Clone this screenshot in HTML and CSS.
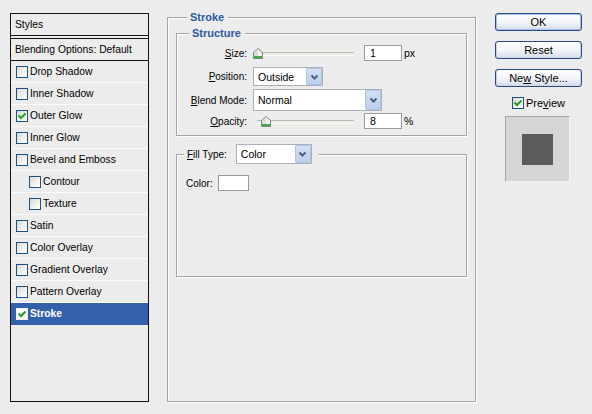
FILE: index.html
```html
<!DOCTYPE html>
<html>
<head>
<meta charset="utf-8">
<title>Layer Style</title>
<link rel="stylesheet" href="styles.css">
</head>
<body>
<div class="dialog">
  <div class="styles-panel">
    <div class="panel-head">Styles</div>
    <div class="panel-blend">Blending Options: Default</div>
    <ul class="fx-list">
      <li class="fx"><span class="cb"></span>Drop Shadow</li>
      <li class="fx"><span class="cb"></span>Inner Shadow</li>
      <li class="fx"><span class="cb"><svg width="10" height="10" viewBox="0 0 10 10"><path d="M1.5 4.5 4 7 8.5 2.5" fill="none" stroke="#21a121" stroke-width="2"/></svg></span>Outer Glow</li>
      <li class="fx"><span class="cb"></span>Inner Glow</li>
      <li class="fx"><span class="cb"></span>Bevel and Emboss</li>
      <li class="fx sub"><span class="cb"></span>Contour</li>
      <li class="fx sub"><span class="cb"></span>Texture</li>
      <li class="fx"><span class="cb"></span>Satin</li>
      <li class="fx"><span class="cb"></span>Color Overlay</li>
      <li class="fx"><span class="cb"></span>Gradient Overlay</li>
      <li class="fx"><span class="cb"></span>Pattern Overlay</li>
      <li class="fx selected"><span class="cb cb-sel"><svg width="10" height="10" viewBox="0 0 10 10"><path d="M1.5 4.5 4 7 8.5 2.5" fill="none" stroke="#21a121" stroke-width="2"/></svg></span>Stroke</li>
    </ul>
  </div>

  <fieldset class="group outer">
    <legend class="title">Stroke</legend>
    <fieldset class="group structure">
      <legend class="title">Structure</legend>
      <div class="fields">
        <div class="field f-size">
          <span class="lbl"><u>S</u>ize:</span>
          <div class="slider"><span class="thumb" style="left:0px"><svg width="10" height="11" viewBox="0 0 10 11"><path d="M5 .5 9.5 4.5V10.5H.5V4.5Z" fill="#eef0ee" stroke="#7a847c"/><path d="M1 4.8 5 1.2V10H1Z" fill="#d8ddd8"/><rect x="1" y="8" width="8" height="2" fill="#3cae48"/></svg></span></div>
          <span class="num">1</span><span class="unit">px</span>
        </div>
        <div class="field f-pos">
          <span class="lbl"><u>P</u>osition:</span>
          <div class="select sel-pos"><span class="val">Outside</span><span class="arrow"><svg width="9" height="6" viewBox="0 0 9 6"><path d="M1.5 1.5 4.5 4.5 7.5 1.5" fill="none" stroke="#4d5b78" stroke-width="2"/></svg></span></div>
        </div>
        <div class="field f-blend">
          <span class="lbl"><u>B</u>lend Mode:</span>
          <div class="select sel-blend"><span class="val">Normal</span><span class="arrow"><svg width="9" height="6" viewBox="0 0 9 6"><path d="M1.5 1.5 4.5 4.5 7.5 1.5" fill="none" stroke="#4d5b78" stroke-width="2"/></svg></span></div>
        </div>
        <div class="field f-opac">
          <span class="lbl"><u>O</u>pacity:</span>
          <div class="slider"><span class="thumb" style="left:8px"><svg width="10" height="11" viewBox="0 0 10 11"><path d="M5 .5 9.5 4.5V10.5H.5V4.5Z" fill="#eef0ee" stroke="#7a847c"/><path d="M1 4.8 5 1.2V10H1Z" fill="#d8ddd8"/><rect x="1" y="8" width="8" height="2" fill="#3cae48"/></svg></span></div>
          <span class="num">8</span><span class="unit">%</span>
        </div>
      </div>
    </fieldset>

    <fieldset class="group fill">
      <legend class="fill-legend"><span class="fill-lbl"><u>F</u>ill Type:</span><span class="select sel-fill"><span class="val">Color</span><span class="arrow"><svg width="9" height="6" viewBox="0 0 9 6"><path d="M1.5 1.5 4.5 4.5 7.5 1.5" fill="none" stroke="#4d5b78" stroke-width="2"/></svg></span></span></legend>
      <div class="color-row"><span>Color:</span><span class="swatch"></span></div>
    </fieldset>
  </fieldset>

  <div class="actions">
    <button class="btn btn-default">OK</button>
    <button class="btn">Reset</button>
    <button class="btn">Ne<u>w</u> Style...</button>
    <div class="preview-check"><span class="cb"><svg width="10" height="10" viewBox="0 0 10 10"><path d="M1.5 4.5 4 7 8.5 2.5" fill="none" stroke="#21a121" stroke-width="2"/></svg></span>Pre<u>v</u>iew</div>
    <div class="preview-box"><div class="preview-square"></div></div>
  </div>
</div>
</body>
</html>
```

FILE: styles.css
```css
* { box-sizing: border-box; }
html, body { margin: 0; padding: 0; background: #ececec; }
body {
  font-family: "Liberation Sans", Arial, sans-serif;
  color: #000;
  width: 592px;
  height: 414px;
  overflow: hidden;
}
u { text-decoration: underline; text-underline-offset: 1px; }

.dialog {
  display: flex;
  align-items: flex-start;
  gap: 18px;
  padding: 11px 0 0 10px;
}

/* ---------- left styles list ---------- */
.styles-panel {
  width: 139px;
  height: 389px;
  margin-top: 2px;
  border: 1px solid #141414;
  background: #ececec;
  font-size: 10.3px;
}
.panel-head {
  height: 22px;
  line-height: 21px;
  padding-left: 4px;
  border-bottom: 1px solid #141414;
}
.panel-blend {
  height: 23px;
  line-height: 21px;
  margin-top: 2px;
  padding-left: 4px;
  border-top: 1px solid #141414;
  border-bottom: 1px solid #141414;
}
.fx-list { list-style: none; margin: 0; padding: 0; }
.fx {
  display: flex;
  align-items: center;
  height: 22px;
  padding-left: 5px;
  border-bottom: 1px solid #fbfbfb;
  white-space: nowrap;
}
.fx.sub { padding-left: 18px; }
.fx.selected {
  background: #3360aa;
  color: #fff;
  font-weight: bold;
  border-bottom-color: #3360aa;
}
.cb {
  width: 12px;
  height: 12px;
  margin-right: 2px;
  border: 1px solid #1d5283;
  background: linear-gradient(135deg, #d9d9d3, #f6f6f3 70%, #ffffff);
  display: flex;
  align-items: center;
  justify-content: center;
  flex: none;
}
.cb-sel { border-color: #f0f0f0; background: #fff; }

/* ---------- group boxes ---------- */
.group {
  margin: 0;
  padding: 0;
  min-width: 0;
  border: 1px solid #a4a4a4;
  box-shadow: inset 1px 1px 0 #fff, 1px 1px 0 #fff;
}
.title {
  padding: 0 4px 0 3px;
  font-size: 11px;
  line-height: 13px;
  font-weight: bold;
  color: #2d5aa8;
  background: #ececec;
}
.outer {
  width: 309px;
  height: 391px;
  padding: 0 8px;
}
.outer > legend { margin-left: 11px; }
.structure {
  margin-top: 3px;
  padding: 0 0 6px 0;
}
.structure > legend { margin-left: 12px; }

.fields { padding-top: 5px; font-size: 10px; }
.field { display: flex; align-items: center; }
.lbl {
  width: 70px;
  margin-right: 6px;
  text-align: right;
  white-space: nowrap;
}
.f-size { height: 16px; }
.f-pos { height: 19px; margin-top: 6px; }
.f-blend { height: 22px; margin-top: 3px; }
.f-opac { height: 16px; margin-top: 2px; }

.slider {
  position: relative;
  width: 101px;
  height: 16px;
}
.slider::before {
  content: "";
  position: absolute;
  left: 4px;
  right: 0;
  top: 7px;
  height: 2px;
  border-top: 1px solid #b9b9ad;
  border-bottom: 1px solid #fbfbf2;
}
.thumb {
  position: absolute;
  top: 3px;
  width: 10px;
  height: 11px;
  display: block;
}
.thumb svg { display: block; }
.num {
  width: 38px;
  height: 16px;
  margin-left: 10px;
  padding-left: 5px;
  border: 1px solid #9b9b9b;
  background: #fff;
  font-size: 10.5px;
  line-height: 14px;
}
.unit { margin-left: 2px; font-size: 10.5px; }

.select {
  display: flex;
  height: 100%;
  border: 1px solid #a9b1bc;
  background: #fff;
}
.select .val {
  flex: 1;
  padding-left: 4px;
  display: flex;
  align-items: center;
  font-size: 10.5px;
}
.select .arrow {
  width: 16px;
  margin: 0;
  border: 1px solid #b3c3df;
  border-radius: 1px;
  background: linear-gradient(#d3e0f6, #bccff0);
  display: flex;
  align-items: center;
  justify-content: center;
}
.sel-pos { width: 70px; }
.sel-blend { width: 129px; }

/* fill type */
.fill {
  margin-top: 8px;
  padding: 0 0 85px 0;
}
.fill-legend {
  margin-left: 7px;
  padding: 0 6px 0 3px;
  display: flex;
  align-items: center;
  gap: 9px;
  font-size: 10px;
  background: #ececec;
}
.sel-fill { width: 76px; height: 20px; }
.color-row {
  display: flex;
  align-items: center;
  height: 16px;
  margin-top: 11px;
  padding-left: 9px;
  font-size: 10px;
}
.swatch {
  width: 31px;
  height: 16px;
  margin-left: 5px;
  border: 1px solid #9a9a9a;
  background: #fff;
}

/* ---------- right actions ---------- */
.actions {
  width: 87px;
  margin-top: 2px;
  margin-left: 1px;
  display: flex;
  flex-direction: column;
  align-items: center;
}
.btn {
  width: 87px;
  height: 18px;
  padding: 0;
  border: 1px solid #2b4a83;
  border-radius: 3px;
  background: linear-gradient(#ffffff 0%, #f6f7fa 45%, #e3e8f1 80%, #cdd5e5 100%);
  box-shadow: inset 1px 0 0 #c3d1ee, inset -1px 0 0 #c3d1ee;
  font-family: "Liberation Sans", Arial, sans-serif;
  font-size: 11px;
  line-height: 16px;
  color: #000;
  text-align: center;
}
.btn-default {
  box-shadow: inset 0 0 0 1px #a9c0ea, inset 1px 0 0 #c3d1ee;
}
.btn + .btn { margin-top: 10px; }
.preview-check {
  display: flex;
  align-items: center;
  height: 12px;
  margin-top: 10px;
  font-size: 11px;
}
.preview-box {
  width: 65px;
  height: 66px;
  margin-top: 7px;
  margin-right: 2px;
  border-top: 1px solid #a6a6a6;
  border-left: 1px solid #a6a6a6;
  border-right: 1px solid #f4f4f4;
  border-bottom: 1px solid #f4f4f4;
  background: #d5d5d5;
  display: flex;
  align-items: center;
  justify-content: center;
}
.preview-square {
  width: 31px;
  height: 31px;
  background: #5b5b5b;
}
```
